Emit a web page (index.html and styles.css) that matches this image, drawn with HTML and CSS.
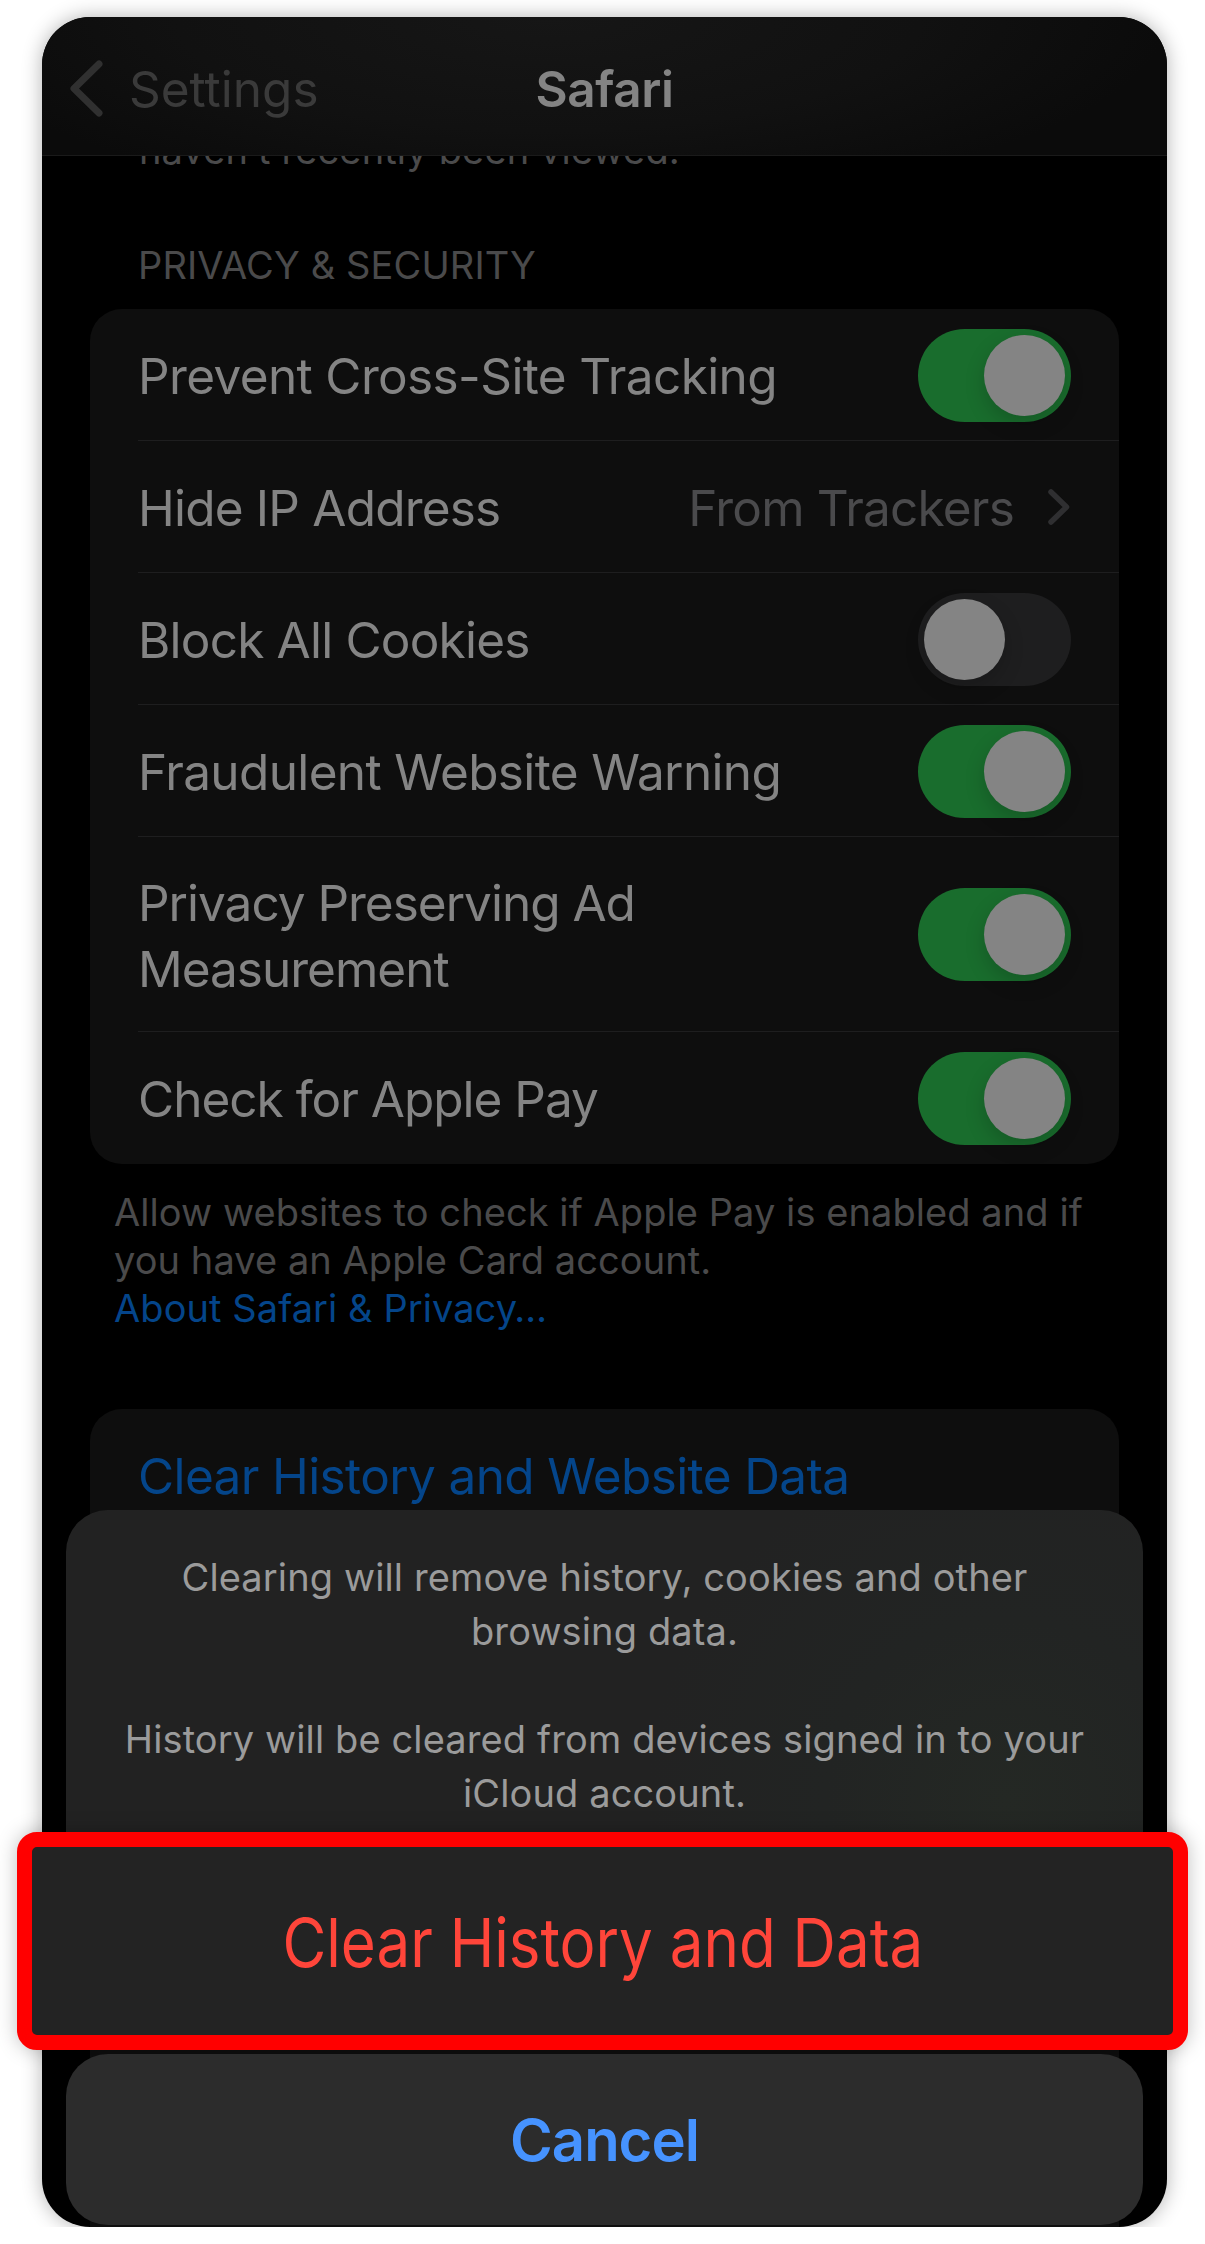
FILE: index.html
```html
<!DOCTYPE html>
<html lang="en">
<head>
    <meta charset="UTF-8">
    <meta name="viewport" content="width=device-width, initial-scale=1.0">
    <title>Safari Settings</title>
    <link rel="stylesheet" href="styles.css">
</head>
<body>
    <div class="phone">
        <header class="navbar">
            <div class="back">
                <svg class="back-icon" width="33" height="57" viewBox="0 0 33 57">
                    <path d="M29 4 L4 28.5 L29 53"/>
                </svg>
                <span class="back-label">Settings</span>
            </div>
            <h1>Safari</h1>
        </header>

        <main class="content">
            <p class="hint">haven’t recently been viewed.</p>
            <h2>PRIVACY &amp; SECURITY</h2>
            <div class="card">
                <div class="row">
                    <span class="label">Prevent Cross-Site Tracking</span>
                    <span class="toggle on"></span>
                </div>
                <div class="row">
                    <span class="label snug">Hide IP Address</span>
                    <span class="detail">From Trackers</span>
                    <svg class="chevron" width="22" height="36" viewBox="0 0 22 36">
                        <path d="M3 3 L18.5 18 L3 33"/>
                    </svg>
                </div>
                <div class="row">
                    <span class="label snug">Block All Cookies</span>
                    <span class="toggle"></span>
                </div>
                <div class="row">
                    <span class="label">Fraudulent Website Warning</span>
                    <span class="toggle on"></span>
                </div>
                <div class="row tall">
                    <span class="label tight">Privacy Preserving Ad<br>Measurement</span>
                    <span class="toggle on"></span>
                </div>
                <div class="row">
                    <span class="label tight">Check for Apple Pay</span>
                    <span class="toggle on"></span>
                </div>
            </div>
            <p class="footnote">Allow websites to check if Apple Pay is enabled and if<br>you have an Apple Card account.<br><a class="link">About Safari &amp; Privacy…</a></p>
            <div class="card card-last">
                <div class="row">
                    <span class="label link">Clear History and Website Data</span>
                </div>
            </div>
        </main>

        <div class="sheet">
            <div class="message">
                <p>Clearing will remove history, cookies and other<br>browsing data.</p>
                <p>History will be cleared from devices signed in to your<br>iCloud account.</p>
            </div>
            <button class="destructive"><span>Clear History and Data</span></button>
            <button class="cancel">Cancel</button>
        </div>
    </div>
</body>
</html>
```
FILE: styles.css
```css
* {
    box-sizing: border-box;
}
body {
    margin: 0;
    background-color: #fff;
    font-family: Inter, "Liberation Sans", sans-serif;
    color: #848484;
}
h1, h2, p {
    margin: 0;
}
button {
    display: block;
    padding: 0;
    font-family: inherit;
}
.phone {
    position: relative;
    display: flex;
    flex-direction: column;
    width: 1125px;
    height: 2210px;
    margin: 17px 0 0 42px;
    border-radius: 48px;
    background-color: #000;
    box-shadow: 0 0 20px rgba(0, 0, 0, 0.3);
}

/* top bar */
.navbar {
    display: grid;
    grid-template-columns: 1fr auto 1fr;
    align-items: center;
    flex: none;
    height: 139px;
    padding: 0 28px;
    border-bottom: 1px solid #1a1a1a;
    border-radius: 48px 48px 0 0;
    background: radial-gradient(ellipse 620px 190px at 45% 0, #161616, #111 60%, #0b0b0b);
    font-size: 49.5px;
}
.back {
    display: flex;
    align-items: center;
    color: #3a3a3a;
}
.back-icon {
    margin-top: 4px;
    margin-right: 26px;
}
.back-icon path {
    fill: none;
    stroke: #303030;
    stroke-width: 7;
    stroke-linecap: round;
    stroke-linejoin: round;
}
.back-label {
    padding-top: 5px;
}
h1 {
    padding-top: 5px;
    font-size: 49.5px;
    font-weight: 600;
    letter-spacing: -0.4px;
}

/* settings list */
.content {
    flex: 1;
    overflow: hidden;
    padding: 0 48px;
    border-radius: 0 0 48px 48px;
}
.hint, h2, .footnote {
    font-size: 38px;
    font-weight: 400;
    line-height: 48px;
    color: #4a4a4b;
    white-space: nowrap;
}
.hint {
    margin-top: -30px;
    padding-left: 49px;
    letter-spacing: 0.14px;
}
h2 {
    margin: 67px 0 20px;
    padding-left: 48px;
    letter-spacing: 0.12px;
}
.card {
    border-radius: 32px;
    background-color: #0e0e0e;
}
.row {
    display: flex;
    align-items: center;
    height: 132px;
    margin-left: 48px;
    padding-right: 48px;
    border-bottom: 1px solid #1e1e1f;
}
.row:last-child {
    border-bottom: none;
}
.tall {
    height: 195px;
}
.label, .detail {
    padding-top: 2px;
    font-size: 49.5px;
    line-height: 66px;
    letter-spacing: -0.63px;
    white-space: nowrap;
}
.tall .label {
    padding-top: 4px;
}
.label {
    flex: 1;
}
.detail {
    color: #4a4a4c;
}
.snug, .detail {
    letter-spacing: -0.8px;
}
.tight {
    letter-spacing: -1px;
}
.chevron {
    margin-left: 34px;
    margin-right: 1px;
}
.chevron path {
    fill: none;
    stroke: #2f2f31;
    stroke-width: 5.5;
    stroke-linecap: round;
    stroke-linejoin: round;
}
.toggle {
    display: flex;
    width: 153px;
    height: 93px;
    margin-top: 1px;
    padding: 6px;
    border-radius: 47px;
    background-color: #1e1e1f;
}
.toggle::before {
    content: '';
    width: 81px;
    height: 81px;
    border-radius: 50%;
    background-color: #848484;
    box-shadow: 0 8px 20px rgba(0, 0, 0, 0.18);
}
.on {
    justify-content: flex-end;
    background-color: #196d2d;
}
.footnote {
    margin: 24px 0 77px;
    padding-left: 24px;
    letter-spacing: 0.07px;
}
.link {
    color: #04458a;
}
.card-last {
    height: 900px;
}

/* action sheet over the list */
.sheet {
    position: absolute;
    top: 1493px;
    left: 24px;
    width: 1077px;
}
.message {
    height: 322px;
    padding-top: 40px;
    border-radius: 42px 42px 0 0;
    background: radial-gradient(circle 360px at 940px 290px, #242824, #222423 50%, #222);
    font-size: 38px;
    line-height: 54px;
    letter-spacing: 0.12px;
    color: #9b9b9b;
    text-align: center;
    white-space: nowrap;
}
.message p {
    margin-bottom: 54px;
}
.destructive {
    width: 1171px;
    height: 218px;
    margin-left: -49px;
    padding-top: 1px;
    border: 15px solid #f00;
    border-radius: 20px;
    background-color: #232323;
    box-shadow: 0 0 20px rgba(0, 0, 0, 0.25);
    font-size: 68px;
    color: #ff453a;
}
.destructive span {
    display: inline-block;
    transform: scaleX(0.883);
}
.cancel {
    width: 1077px;
    height: 171px;
    margin-top: 4px;
    border: none;
    border-radius: 42px;
    background-color: #2c2c2c;
    font-size: 58px;
    font-weight: 600;
    letter-spacing: -1px;
    color: #4693ff;
}
```
